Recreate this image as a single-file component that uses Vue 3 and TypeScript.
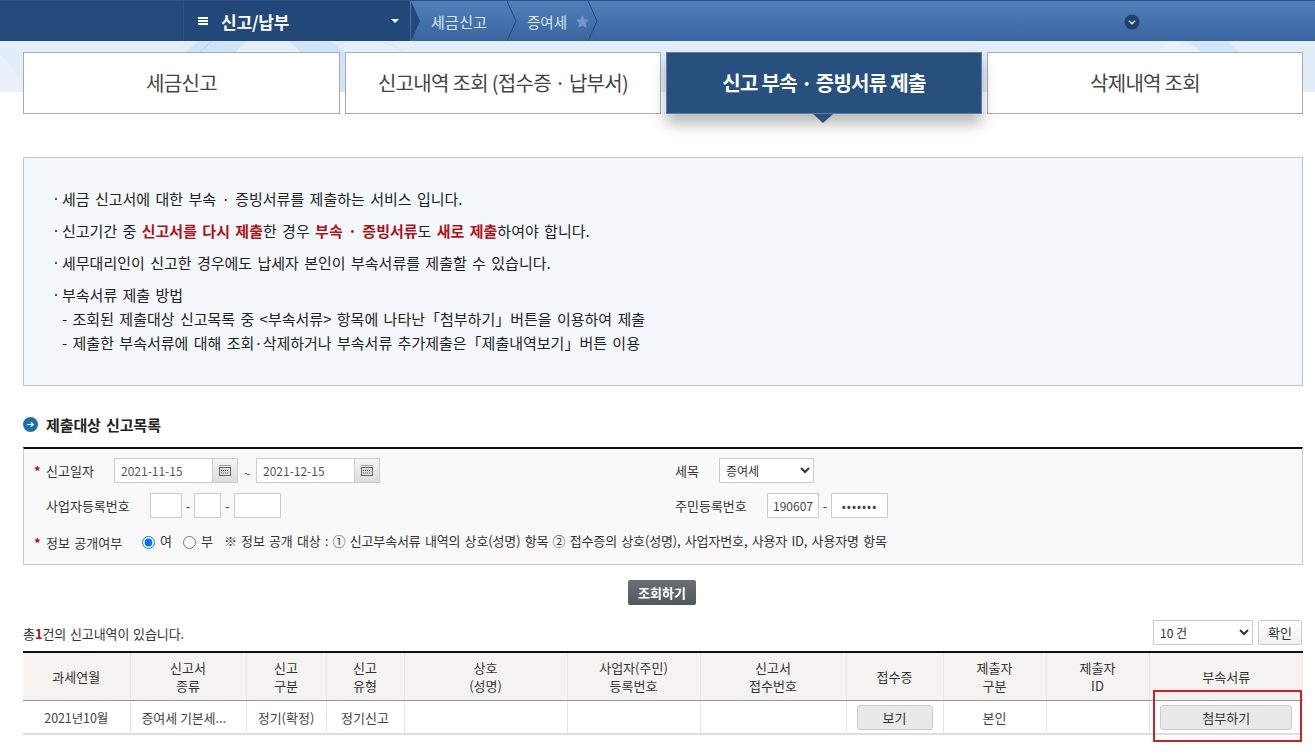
<script setup lang="ts">
const tabs = ['세금신고', '신고내역 조회 (접수증 · 납부서)', '신고 부속 · 증빙서류 제출', '삭제내역 조회']
const heads: { label: string[]; w: number }[] = [
  { label: ['과세연월'], w: 107 },
  { label: ['신고서', '종류'], w: 116 },
  { label: ['신고', '구분'], w: 80 },
  { label: ['신고', '유형'], w: 78 },
  { label: ['상호', '(성명)'], w: 163 },
  { label: ['사업자(주민)', '등록번호'], w: 133 },
  { label: ['신고서', '접수번호'], w: 146 },
  { label: ['접수증'], w: 97 },
  { label: ['제출자', '구분'], w: 103 },
  { label: ['제출자', 'ID'], w: 103 },
  { label: ['부속서류'], w: 154 },
]
</script>

<template>
  <div class="page">
    <header class="nav">
      <div class="nav-left"></div>
      <div class="nav-menu">
        <span class="burger"><i></i><i></i><i></i></span>
        <span class="menu-title">신고/납부</span>
        <span class="caret"></span>
        <svg class="menu-tip" width="10" height="40" viewBox="0 0 10 40"><path d="M0 0 L9 20 L0 40 Z" fill="#22487a" /></svg>
      </div>
      <div class="crumb">세금신고<svg class="chev" width="10" height="40" viewBox="0 0 10 40"><path d="M0 0 L9 20 L0 40" fill="none" stroke="#234a7c" /></svg></div>
      <div class="crumb crumb2">증여세
        <svg class="star" width="15" height="15" viewBox="0 0 24 24"><path d="M12 1.5l3.2 6.8 7.3 1-5.3 5.2 1.3 7.4L12 18.4 5.5 21.9l1.3-7.4L1.5 9.3l7.3-1z" fill="#7196c6" /></svg>
        <svg class="chev" width="10" height="40" viewBox="0 0 10 40"><path d="M0 0 L9 20 L0 40" fill="none" stroke="#234a7c" /></svg>
      </div>
      <span class="nav-spacer"></span>
      <svg class="down" width="16" height="16" viewBox="0 0 16 16"><circle cx="8" cy="8" r="7.5" fill="#22406c" /><path d="M5 6.8 L8 9.8 L11 6.8" fill="none" stroke="#dfe8f3" stroke-width="1.3" /></svg>
    </header>

    <div class="band">
      <svg class="deco" width="1315" height="51" viewBox="0 0 1315 51">
        <path d="M0 14 Q14 24 24 51 L0 51 Z" fill="#e9f1fb" />
        <circle cx="364" cy="62" r="64" fill="#e6effb" stroke="#d6e4f5" />
        <circle cx="265" cy="90" r="112" fill="#cfe3f9" />
        <circle cx="268" cy="34" r="39.5" fill="#e6f0fb" />
        <path d="M212 0 L200 11" stroke="#b5cfee" fill="none" />
        <path d="M1170 0 Q1195 4 1212 20 L1150 20 Z" fill="#e9f1fb" />
        <path d="M1186 0 L1226 0 Q1234 4 1240 14 L1204 14 Q1198 6 1186 0 Z" fill="#d2e5fa" />
      </svg>
      <nav class="tabs">
        <button v-for="(t, i) in tabs" :key="t" class="tab" :class="{ active: i === 2 }">{{ t }}</button>
      </nav>
    </div>

    <main class="content">
      <section class="info">
        <p class="li">세금 신고서에 대한 부속 · 증빙서류를 제출하는 서비스 입니다.</p>
        <p class="li">신고기간 중 <b>신고서를 다시 제출</b>한 경우 <b>부속 · 증빙서류</b>도 <b>새로 제출</b>하여야 합니다.</p>
        <p class="li">세무대리인이 신고한 경우에도 납세자 본인이 부속서류를 제출할 수 있습니다.</p>
        <p class="li">부속서류 제출 방법</p>
        <p class="sub">- 조회된 제출대상 신고목록 중 &lt;부속서류&gt; 항목에 나타난「첨부하기」버튼을 이용하여 제출</p>
        <p class="sub">- 제출한 부속서류에 대해 조회·삭제하거나 부속서류 추가제출은「제출내역보기」버튼 이용</p>
      </section>

      <h2 class="section-title">
        <svg width="15" height="15" viewBox="0 0 15 15"><circle cx="7.5" cy="7.5" r="7.5" fill="#1c6fa8" /><path d="M4 7.5h6M8 5.5l2.2 2-2.2 2" fill="none" stroke="#fff" stroke-width="1.2" /></svg>
        제출대상 신고목록
      </h2>

      <section class="search">
        <div class="row row1">
          <div class="field left">
            <span class="req">*</span><label>신고일자</label>
            <span class="date"><span class="date-val">2021-11-15</span><span class="cal"><svg width="14" height="13" viewBox="0 0 14 13"><path d="M1.5 1.5h11" stroke="#555" stroke-dasharray="1 1" /><rect x="1.5" y="3.5" width="11" height="8" fill="#dcdcdc" stroke="#666" /><path d="M3 6.5h8M3 9h8" stroke="#555" stroke-dasharray="1 1" /></svg></span></span>
            <span class="tilde">~</span>
            <span class="date"><span class="date-val">2021-12-15</span><span class="cal"><svg width="14" height="13" viewBox="0 0 14 13"><path d="M1.5 1.5h11" stroke="#555" stroke-dasharray="1 1" /><rect x="1.5" y="3.5" width="11" height="8" fill="#dcdcdc" stroke="#666" /><path d="M3 6.5h8M3 9h8" stroke="#555" stroke-dasharray="1 1" /></svg></span></span>
          </div>
          <div class="field right">
            <label class="rlabel rl1">세목</label>
            <select class="sel tax"><option>증여세</option></select>
          </div>
        </div>
        <div class="row row2">
          <div class="field left">
            <span class="req blank"></span><label class="biz">사업자등록번호</label>
            <input class="inp w32" />
            <span class="dash">-</span>
            <input class="inp w27" />
            <span class="dash d2">-</span>
            <input class="inp w47" />
          </div>
          <div class="field right">
            <label class="rlabel rl2">주민등록번호</label>
            <input class="inp w52 val" value="190607" />
            <span class="dash">-</span>
            <input class="inp w57 pw" type="password" value="1234567" />
          </div>
        </div>
        <div class="row row3">
          <span class="req">*</span><label class="pub">정보 공개여부</label>
          <input class="radio" type="radio" name="p" checked />
          <span class="rtext">여</span>
          <input class="radio r2" type="radio" name="p" />
          <span class="rtext">부</span>
          <span class="note">※ 정보 공개 대상 : ① 신고부속서류 내역의 상호(성명) 항목 ② 접수증의 상호(성명), 사업자번호, 사용자 ID, 사용자명 항목</span>
        </div>
      </section>

      <div class="btn-row"><button class="query">조회하기</button></div>

      <div class="list-bar">
        <span class="count">총<b>1</b>건의 신고내역이 있습니다.</span>
        <span class="bar-right">
          <select class="sel size"><option>10 건</option></select>
          <button class="ok">확인</button>
        </span>
      </div>

      <div class="table-wrap">
        <table class="tbl">
          <colgroup><col v-for="h in heads" :key="h.label.join()" :style="{ width: h.w + 'px' }" /></colgroup>
          <thead>
            <tr><th v-for="h in heads" :key="h.label.join()"><template v-for="(l, i) in h.label" :key="l"><br v-if="i" />{{ l }}</template></th></tr>
          </thead>
          <tbody>
            <tr>
              <td class="ym">2021년10월</td>
              <td class="kind">증여세 기본세...</td>
              <td>정기(확정)</td>
              <td>정기신고</td>
              <td></td>
              <td></td>
              <td></td>
              <td><button class="gbtn view">보기</button></td>
              <td>본인</td>
              <td></td>
              <td><button class="gbtn attach">첨부하기</button></td>
            </tr>
          </tbody>
        </table>
        <div class="highlight"></div>
      </div>
    </main>
  </div>
</template>

<style>
html, body { margin: 0; background: #fff; overflow: hidden; }
</style>

<style scoped>
.page { width: 1315px; height: 754px; overflow: hidden; font-family: "Noto Sans CJK KR", "Noto Sans", sans-serif; color: #333; font-size: 13px; word-spacing: 1.5px; }
.nav { height: 41px; display: flex; align-items: center; background: linear-gradient(#5080bb, #37659f); border-top: 1px solid #2d5486; box-sizing: border-box; color: #fff; }
.nav-left { width: 183px; height: 100%; background: #234a7a; }
.nav-menu { width: 227px; height: 100%; background: #22487a; display: flex; align-items: center; position: relative; box-sizing: border-box; padding-left: 14px; border-left: 1px solid #2b5487; }
.burger { display: flex; flex-direction: column; gap: 1px; width: 10px; }
.burger i { display: block; height: 2px; background: #fff; }
.menu-title { margin-left: 13px; font-size: 17px; font-weight: 700; color: #fff; letter-spacing: -.2px; }
.caret { position: absolute; left: 207px; top: 18px; border: 4px solid transparent; border-top-color: #fff; border-bottom: 0; }
.menu-tip { position: absolute; left: 227px; top: 0; }
.crumb { position: relative; height: 100%; display: flex; align-items: center; font-size: 15px; letter-spacing: .3px; color: #dbe6f3; padding-left: 21px; width: 86px; }
.crumb2 { width: 71px; padding-left: 10px; gap: 8px; font-size: 14.5px; letter-spacing: 0; }
.star { flex: none; }
.chev { position: absolute; right: 0; top: 0; }
.nav-spacer { flex: 1; }
.down { margin-right: 175px; margin-top: 1px; }

.band { height: 51px; background: #e3eefb; position: relative; }
.deco { position: absolute; left: 0; top: 0; }
.tabs { position: relative; display: grid; grid-template-columns: 317px 316px 316px 316px; column-gap: 5px; margin: 0 0 0 23px; padding-top: 11px; }
.tab { height: 62px; background: #fff; border: 1px solid #aaa; font-family: inherit; font-size: 20px; letter-spacing: -.7px; word-spacing: 0; color: #444; padding: 0 0 2px; }
.tab.active { position: relative; background: #28507f; border-color: #5d7ea6; color: #fff; font-weight: 700; box-shadow: 0 10px 14px rgba(0, 0, 0, .28); }
.tab.active::after { content: ""; position: absolute; left: 146px; top: 61px; border: 10px solid transparent; border-top: 9px solid #28507f; border-bottom: 0; }

.content { margin: 0 12px 0 23px; padding-top: 65px; }
.info { height: 229px; box-sizing: border-box; border: 1px solid #bfc4c9; background: #f4f7fc; padding: 29px 0 0 29px; font-size: 15px; color: #222; word-spacing: 2px; }
.info p { margin: 0; line-height: 24px; }
.li { position: relative; padding-left: 9px; margin-bottom: 8px !important; }
.li::before { content: ""; position: absolute; left: 2px; top: 11px; width: 2px; height: 2px; background: #555; }
.info b { color: #b01217; font-weight: 700; }
.li:nth-child(4) { margin-bottom: 0 !important; }
.sub { padding-left: 9px; }

.section-title { margin: 27px 0 0; height: 22px; display: flex; align-items: center; gap: 8px; font-size: 15px; font-weight: 700; color: #222; word-spacing: 2px; letter-spacing: -.1px; }
.search { margin-top: 12px; height: 118px; box-sizing: border-box; border: 1px solid #ccc; border-top: 2px solid #111; background: #f9f9f9; padding: 8px 0 0 10px; color: #333; }
.row { display: flex; align-items: center; }
.row1 { height: 26px; }
.row2 { height: 26px; margin-top: 9px; }
.row3 { height: 26px; margin-top: 11px; }
.field { display: flex; align-items: center; }
.left { width: 641px; }
.req { width: 12px; color: #b01217; font-weight: 700; font-size: 13px; flex: none; }
.blank { display: block; }
.date { display: inline-flex; height: 25px; }
.field > label { flex: none; }
.left > label { width: 68px; }
.left > label.biz { width: 104px; }
.date-val { width: 99px; height: 25px; box-sizing: border-box; border: 1px solid #ccc; background: #fff; padding-left: 6px; line-height: 23px; font-size: 12px; color: #555; }
.cal { width: 25px; height: 25px; box-sizing: border-box; border: 1px solid #ccc; border-left: 0; background: linear-gradient(#f4f4f4, #ddd); display: flex; align-items: center; justify-content: center; }
.tilde { width: 18px; text-align: center; padding-top: 5px; font-size: 11px; }
.rlabel { flex: none; }
.rl1 { width: 44px; font-weight: 400; }
.rl2 { width: 92px; }
.sel { font-family: inherit; font-size: 12px; color: #333; background: #fff; border: 1px solid #ccc; border-radius: 0; padding: 0 0 0 2px; }
.tax { width: 95px; height: 25px; }
.inp { height: 25px; box-sizing: border-box; border: 1px solid #ccc; background: #fff; padding: 0; font-family: inherit; font-size: 12px; color: #444; outline: 0; border-radius: 0; }
.w32 { width: 32px; }
.w27 { width: 27px; }
.w47 { width: 47px; }
.w52 { width: 52px; text-align: center; }
.w57 { width: 57px; text-align: center; letter-spacing: 1px; }
.dash { width: 12px; text-align: center; color: #444; }
.d2 { width: 13px; }
.pub { width: 96px; flex: none; }
.radio { margin: 0; width: 13px; height: 13px; accent-color: #0075ff; flex: none; }
.r2 { margin-left: 11px; }
.rtext { margin-left: 5px; position: relative; top: -2px; }
.note { margin-left: 11px; font-size: 13px; letter-spacing: -.14px; white-space: nowrap; line-height: 24px; padding-bottom: 2px; }

.btn-row { display: flex; justify-content: center; margin-top: 15px; padding-right: 2px; }
.query { width: 68px; height: 25px; border: 0; border-radius: 2px; background: linear-gradient(#6a7076, #51575d); color: #fff; font-family: inherit; font-size: 13px; font-weight: 700; padding: 0; }

.list-bar { display: flex; justify-content: space-between; align-items: center; height: 25px; margin-top: 15px; }
.count { font-size: 13px; padding-top: 1px; color: #333; word-spacing: 1px; letter-spacing: -.1px; }
.count b { color: #b01217; }
.bar-right { display: flex; gap: 5px; margin-right: 1px; }
.size { width: 100px; height: 25px; }
.ok { width: 44px; height: 25px; background: linear-gradient(#fff, #f0f0f0); border: 1px solid #ccc; border-radius: 2px; font-family: inherit; font-size: 13px; color: #333; padding: 0; }

.table-wrap { position: relative; margin-top: 6px; }
.tbl { width: 1280px; table-layout: fixed; border-collapse: collapse; border-top: 2px solid #111; border-bottom: 2px solid #ddd; }
.tbl th { height: 47px; padding: 0; background: #f4f3f1; border-left: 1px solid #e7e7e7; border-bottom: 1px solid #999; font-weight: 400; font-size: 13px; line-height: 18px; color: #333; }
.tbl td { height: 32px; padding: 0; border-left: 1px solid #e7e7e7; text-align: center; font-size: 13px; color: #444; white-space: nowrap; }
.tbl td.ym { font-size: 12.5px; letter-spacing: -.1px; }
.tbl td.kind { text-align: left; padding-left: 11px; word-spacing: 0; letter-spacing: -.1px; }
.tbl th:first-child, .tbl td:first-child { border-left: 0; }
.gbtn { height: 25px; vertical-align: middle; background: #e9e9e9; border: 1px solid #ccc; border-radius: 3px; font-family: inherit; font-size: 13px; color: #333; padding: 0; }
.view { width: 76px; }
.attach { width: 132px; }
.highlight { position: absolute; left: 1130px; top: 39px; width: 149px; height: 52px; box-sizing: border-box; border: 2px solid #c9232a; }
</style>
